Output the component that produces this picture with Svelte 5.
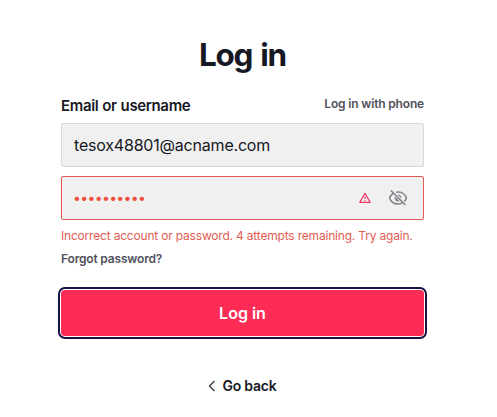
<script lang="ts">
  let username = $state("tesox48801@acname.com");
  let password = $state("secret1234");
  let visible = $state(false);
  let error = $state("Incorrect account or password. 4 attempts remaining. Try again.");
</script>

<main class="login">
  <h1 class="title">Log in</h1>

  <form onsubmit={(e) => e.preventDefault()}>
    <div class="description">
      <label for="username">Email or username</label>
      <a class="phone-link" href="#phone">Log in with phone</a>
    </div>

    <div class="field">
      <input id="username" type="text" bind:value={username} />
    </div>

    <div class="field invalid">
      <input
        class="password"
        type={visible ? "text" : "password"}
        bind:value={password}
        aria-label="Password"
      />
      <svg class="warning" viewBox="0 0 12 12" aria-hidden="true">
        <path d="M6 1.3 11.2 10.4H.8Z" />
        <path d="M6 4.5v2.6M6 8v1.1" />
      </svg>
      <button
        type="button"
        class="toggle"
        onclick={() => (visible = !visible)}
        aria-label="Toggle password visibility"
      >
        <svg viewBox="0 0 20 20" aria-hidden="true">
          <path d="M5.5 5.2C3.4 6.4 2.1 8.2 1.6 10c1.2 3.7 4.4 6 8.4 6 1.6 0 3-.3 4.2-1M8 4.2c4.8-1 9 1.4 10.4 5.8-.4 1.3-1.2 2.6-2.2 3.5" />
          <path class="pupil" d="m6.9 8.5 4.6 4.7a3.5 3.5 0 0 1-4.6-4.7ZM9.4 6.5a3.5 3.5 0 0 1 4.1 4.1Z" />
          <path d="m2.9 2.5 14.4 14.4" />
        </svg>
      </button>
    </div>

    <p class="error">{error}</p>
    <a class="forgot" href="#forgot">Forgot password?</a>

    <button type="submit" class="submit">Log in</button>
  </form>

  <a class="back" href="#back">
    <svg viewBox="0 0 8 12" aria-hidden="true"><path d="M6.5 1 1.5 6l5 5" /></svg>
    <span>Go back</span>
  </a>
</main>

<style>
  :global(body) {
    background: #fff;
  }

  .login {
    box-sizing: border-box;
    width: 363px;
    margin-left: 61px;
    padding-top: 35px;
    color: #161823;
    font-family: Inter, "Liberation Sans", sans-serif;
  }

  .title {
    margin: 0;
    font-size: 31.5px;
    font-weight: 700;
    line-height: 40px;
    letter-spacing: -1.3px;
    word-spacing: 2px;
    text-align: center;
  }

  .description {
    display: flex;
    justify-content: space-between;
    height: 26px;
    margin: 22px 0 0;
  }

  label {
    font-size: 15px;
    font-weight: 600;
    line-height: 18px;
    letter-spacing: -0.35px;
    word-spacing: 0.5px;
  }

  a {
    text-decoration: none;
  }

  .phone-link,
  .forgot {
    color: #50515a;
    font-size: 12px;
    font-weight: 600;
    line-height: 14px;
    letter-spacing: -0.17px;
  }

  .field {
    display: flex;
    align-items: center;
    box-sizing: border-box;
    height: 44px;
    padding: 0 15px 0 12px;
    border: 1px solid #d8d8d9;
    border-radius: 2px;
    background: #f0f0f0;
  }

  .field + .field {
    margin-top: 9px;
  }

  .invalid {
    border-color: #e25b52;
  }

  input {
    flex: 1;
    min-width: 0;
    padding: 0;
    border: 0;
    outline: none;
    background: transparent;
    color: #161823;
    font: 400 16px/20px Inter, "Liberation Sans", sans-serif;
    letter-spacing: -0.2px;
  }

  .password {
    margin-left: -1px;
    color: #f04e3e;
    font-size: 14px;
    letter-spacing: -0.65px;
  }

  .warning {
    width: 12px;
    height: 12px;
    margin-right: 17px;
    fill: none;
    stroke: #e93963;
    stroke-width: 1.2;
    stroke-linejoin: round;
  }

  .toggle {
    display: flex;
    padding: 0;
    border: 0;
    background: none;
    cursor: pointer;
  }

  .toggle svg {
    width: 20px;
    height: 20px;
    fill: none;
    stroke: #85868b;
    stroke-width: 1.6;
  }

  .toggle .pupil {
    fill: #85868b;
    stroke: none;
  }

  .error {
    margin: 8px 0 0;
    color: #e25b52;
    font-size: 12px;
    line-height: 16px;
    letter-spacing: -0.19px;
    white-space: nowrap;
  }

  .forgot {
    display: block;
    width: max-content;
    margin-top: 8px;
  }

  .submit {
    display: block;
    width: 100%;
    height: 46px;
    margin-top: 24px;
    padding: 0;
    border: 0;
    border-radius: 4px;
    outline: 2px solid #161447;
    outline-offset: 1px;
    background: #fe2c55;
    color: #fff;
    font: 600 16px/20px Inter, "Liberation Sans", sans-serif;
  }

  .back {
    display: flex;
    align-items: center;
    justify-content: center;
    gap: 6px;
    margin-top: 40px;
    color: #161823;
    font-size: 14px;
    font-weight: 600;
    line-height: 20px;
    letter-spacing: -0.2px;
  }

  .back svg {
    width: 8px;
    height: 12px;
    fill: none;
    stroke: #34353e;
    stroke-width: 1.3;
  }
</style>
